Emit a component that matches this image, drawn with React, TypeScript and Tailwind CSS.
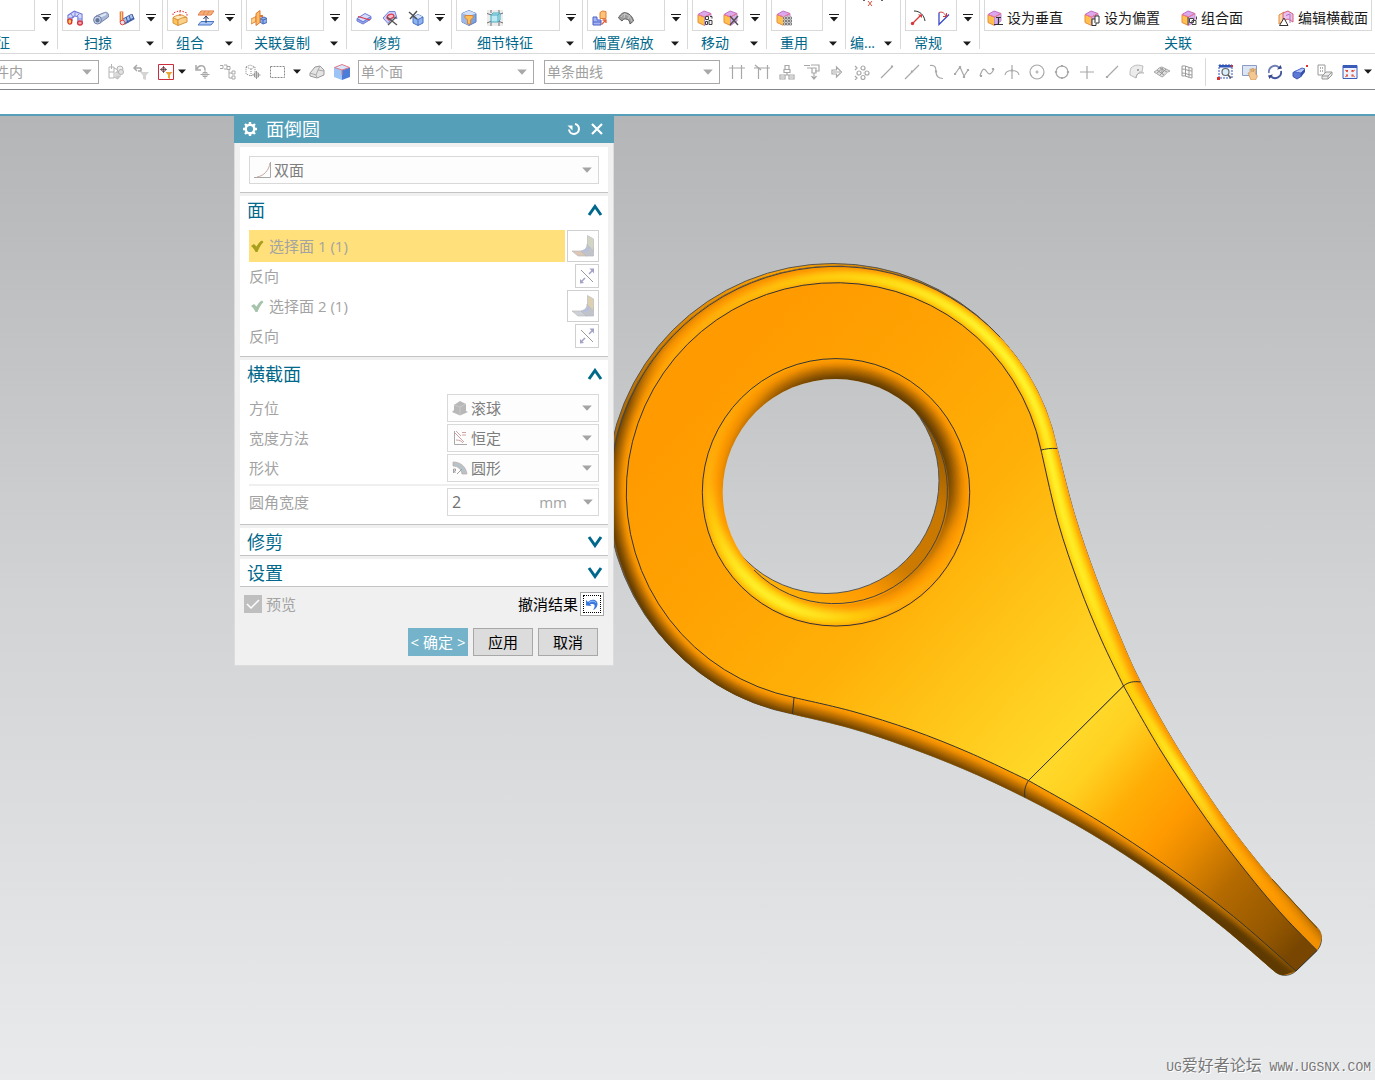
import type { ReactNode } from "react";

type Pt = [number, number];

/* ---------- small pieces ---------- */

const Icon = ({ children, size = 16 }: { children: ReactNode; size?: number }) => (
  <svg width={size} height={size} viewBox="0 0 16 16" fill="none" className="shrink-0" aria-hidden="true">
    {children}
  </svg>
);

const Triangle = ({ color = "#1a1a1a", width = 8 }: { color?: string; width?: number }) => (
  <svg width={width} height={width / 2 + 1} viewBox="0 0 8 5" className="shrink-0 pointer-events-none" aria-hidden="true">
    <path d="M0 0.5h8L4 4.8z" fill={color} />
  </svg>
);

const MoreArrow = () => (
  <svg width="10" height="8" viewBox="0 0 10 8" aria-hidden="true">
    <path d="M0 0.5h10" stroke="#1a1a1a" />
    <path d="M1 3h8L5 7.4z" fill="#1a1a1a" />
  </svg>
);

const Cube = () => (
  <>
    <path d="M1 4.5 7.500 7v8.500L1 12.500z" fill="#ffc04e" stroke="#ea8a3c" />
    <path d="M7.500 7 14 3.500V11l-6.500 4.500z" fill="#d3b0e8" stroke="#c48ad0" />
    <path d="M1 4.500 7 1l7 2.500L7.500 7z" fill="#dba8ee" stroke="#c070c0" />
    <path d="M1 4.500 7.500 7 14 3.500" stroke="#f0788a" />
  </>
);

/* ---------- ribbon icons ---------- */

const sweepIcons = [
  <Icon key="a">
    <path d="M3 11V6.500L7.500 3.500l5.500 2V12" stroke="#6a76d8" strokeWidth="5.200" />
    <path d="M3 11V6.500L7.500 3.500l5.500 2V12" stroke="#d4d8fa" strokeWidth="3.200" />
    <path d="m4 4 3 4M8 2v3.500M12 4 9.500 6.500M5 8H1.500M10.500 9H15" stroke="#8088dc" />
    <ellipse cx="2.800" cy="11.500" rx="2" ry="2.600" fill="#ffd060" stroke="#e0322c" strokeWidth="1.300" />
    <ellipse cx="13" cy="13" rx="2.400" ry="2" fill="#f6a0a8" stroke="#d83444" strokeWidth="1.300" />
  </Icon>,
  <Icon key="b">
    <path d="M3 6 11.500 2.500c3-1 4.500 1.500 4 4.500L7 13z" fill="#a9b8d6" stroke="#7787ab" />
    <path d="M5 7.500 13 4" stroke="#dfe7f5" strokeWidth="2" />
    <ellipse cx="4.500" cy="10" rx="3.900" ry="4" fill="#c8d3e8" stroke="#6d7ea6" />
    <ellipse cx="4.500" cy="10.300" rx="2.100" ry="2.200" fill="#66779c" />
  </Icon>,
  <Icon key="c">
    <path d="M4 12 14 6.500" stroke="#4c69ae" strokeWidth="6.500" />
    <path d="M4 11.500 13.500 6" stroke="#a8c2ee" strokeWidth="3.500" />
    <path d="m7 7 2 6M10 5.500l2 5.500M13 4l2 5" stroke="#3c589c" />
    <path d="M2.500 1.500V12" stroke="#e06a38" strokeWidth="3.600" />
    <path d="M2.500 2v9" stroke="#ffd28a" strokeWidth="1.400" />
    <circle cx="3.500" cy="12.500" r="2.300" fill="#e8e0f0" stroke="#dd4a3a" />
  </Icon>,
];

const combineIcons = [
  <Icon key="a">
    <path d="M1 7.500 6 10v5.500L1 13z" fill="#ffc35c" stroke="#d9943a" />
    <path d="M1 7.500c3-2 5-2.500 9-2.500l5 2.500L6 10z" fill="#ffe9bd" stroke="#d9943a" />
    <path d="M6 10c3-2.500 6-2.500 9-2.500V12l-9 3.500z" fill="#f8d08a" stroke="#d9943a" />
    <path d="M1 5V3l7-2.500L15 3v3M8 1v5" stroke="#e02828" strokeDasharray="1.500 1.500" />
  </Icon>,
  <Icon key="b">
    <path d="M3 1h13l-3 4H0z" fill="#ffd49a" stroke="#de7140" />
    <path d="M2 3h12M7 1 5 5M11 1 9 5" stroke="#e8894e" />
    <path d="M3 11.500h13L13 15H0z" fill="#a9c8f5" stroke="#4a74c4" />
    <path d="M8 13V7M5.500 9 8 6l2.500 3" stroke="#2b3a66" />
  </Icon>,
];

const copyIcons = [
  <Icon key="a">
    <path d="M0 9 5 6.500v5L0 14z" fill="#ffcf88" stroke="#e08a3c" />
    <path d="M9 8.500 13 7l3 1.500v4L12 14l-3-2z" fill="#8fb2ee" stroke="#4568b8" />
    <path d="m9 8.500 3 1.500 4-1.500M12 10v4" stroke="#4568b8" />
    <path d="M5 3.500 9 .5v12L5 15.500z" fill="#ffbc66" stroke="#dc7830" />
    <path d="M9 6h3" stroke="#dc7830" strokeWidth="2" />
  </Icon>,
];

const trimIcons = [
  <Icon key="a">
    <path d="M1 8.500 9 3.500l6 3L7 12z" fill="#d5dcff" stroke="#6f7cd4" />
    <path d="M1 8.500v2.500l6 3 8-5V6.500L7 12z" fill="#93a6ee" stroke="#6f7cd4" />
    <path d="M2 6.500 14 10" stroke="#e03848" strokeWidth="1.300" />
  </Icon>,
  <Icon key="b">
    <path d="M1 8 7 1.500h6l2 7-4-1-5 6z" fill="#c9cffa" stroke="#7784d8" />
    <path d="M5 8c0-4 6-5 7-2 0 3-4 1-5 4z" fill="#f4c0cc" stroke="#de3a4e" strokeWidth="1.300" />
    <path d="m5 7 10 8M14 7 6 15" stroke="#555" strokeWidth="1.400" />
  </Icon>,
  <Icon key="c">
    <path d="m5 7 5-2.500L15 7v6l-5 2.500L5 13z" fill="#8db4f0" stroke="#4a70c4" />
    <path d="m5 7 5-2.500L15 7l-5 2.500z" fill="#d6e5fc" />
    <path d="m5 7 5 2.500L15 7M10 9.500v6" stroke="#4a70c4" />
    <path d="m1 2 8 7M9 1 2 9" stroke="#505050" strokeWidth="1.400" />
  </Icon>,
];

const detailIcons = [
  <Icon key="a">
    <path d="m1 3.500 7-3 7 3v8.500l-7 3.500L1 12z" fill="#7fa3de" stroke="#5a7dc0" />
    <path d="m1 3.500 7-3 7 3L8 6z" fill="#cfdff8" />
    <path d="M1 3.500V12l7 3.500V6z" fill="#9bb9ea" />
    <path d="M4 5.500h8v2L9.500 10v4h-3v-4L4 7.500z" fill="#ffbe54" stroke="#d8843a" />
  </Icon>,
  <Icon key="b">
    <path d="M0 0h16v16H0z" fill="#ececec" />
    <path d="M0 3.500 4.500 5M0 13l4.500-2M16 3l-5 2M16 13l-5-2M4 0v3M12 0v3M4 16v-4M12 16v-4" stroke="#707070" />
    <path d="m4 5 2-2h7v7l-2 2H4z" fill="#bdeaf2" stroke="#4aa9c0" />
    <path d="M4 5h7v7M11 5l2-2" stroke="#4aa9c0" />
  </Icon>,
];

const offsetIcons = [
  <Icon key="a">
    <path d="M8 2.500 10.500 1 14 1.500V8.500H8z" fill="#ffc277" stroke="#de8038" />
    <path d="M1 7h4v3h4v5H1z" fill="#a4b6f4" stroke="#4c60c4" />
    <path d="M1 12h8" stroke="#4c60c4" />
    <path d="m9.500 14.500 4-4M10.500 10H14v3" stroke="#e0603a" strokeWidth="1.300" />
  </Icon>,
  <Icon key="b">
    <path d="M.5 8C3 3 6 1.500 10 3.500c3 1.500 5 4.500 5.500 7.500L12 14c0-3-2-5-4.500-5C6 9 5 9.500 4 11z" fill="#9c9c9c" stroke="#5c5c5c" />
    <path d="M3 7c2-3 4-3.500 7-1.500 2 1.500 3.500 4 4 6M7 3 6 8M12 5l-2 4" stroke="#c8c8c8" />
  </Icon>,
];

const moveIcons = [
  <Icon key="a">
    <Cube />
    <path d="M8 6h7v9H8z" fill="#f4f4f4" />
    <path d="M8.500 6.500h3v3h-3zM12 10.500h3v4h-3zM8.500 11.500h2v3h-2zM13 6.500h2v2" stroke="#404040" />
  </Icon>,
  <Icon key="b">
    <Cube />
    <path d="m7 6 8 9M15 6l-8 9" stroke="#505050" strokeWidth="1.400" />
  </Icon>,
];

const reuseIcons = [
  <Icon key="a">
    <Cube />
    <path d="M7 6.500h9V16H7z" fill="#fff" />
    <path d="M7.500 7h2v2h-2zM10.500 7h2v2h-2zM13.500 7h2v2h-2zM7.500 10h2v2h-2zM10.500 10h2v2h-2zM13.500 10h2v2h-2zM7.500 13h2v2h-2zM10.500 13h2v2h-2zM13.500 13h2v2h-2z" stroke="#555" strokeWidth="0.700" />
  </Icon>,
];

const commonIcons = [
  <Icon key="a">
    <path d="M4 1c6 0 10 4 11 10" stroke="#333" />
    <path d="m2 14 8-8" stroke="#d83838" strokeWidth="1.200" />
    <path d="M8 4.500h4V8z" fill="#d83838" />
    <circle cx="2.500" cy="13.500" r="1.700" fill="#d83838" />
  </Icon>,
  <Icon key="b">
    <path d="M3 2.500v12L13 4.500" stroke="#3848c8" strokeWidth="1.300" />
    <path d="M3 2.500c3-1 5 0 7 3.500M10.500 3v3.500H7" stroke="#d83838" />
  </Icon>,
];

const relateItems = [
  {
    label: "设为垂直",
    icon: <Icon><Cube /><path d="M7 14.500h9M11.500 7v7.500M9 7.500h5" stroke="#333" strokeWidth="1.200" /></Icon>,
  },
  {
    label: "设为偏置",
    icon: <Icon><Cube /><path d="M8 9h3V6h4v7h-3v2.500H8zM11 9v4" fill="#fff" stroke="#333" /></Icon>,
  },
  {
    label: "组合面",
    icon: <Icon><Cube /><path d="M8.500 8.500h4v4h-4zM11 10.500h4v4h-4zM7 7v8M15.500 6.500v3" fill="#fff" stroke="#444" /></Icon>,
  },
  {
    label: "编辑横截面",
    icon: (
      <Icon>
        <path d="M1 5 6 2v9l-5 3z" fill="#ffd8a8" stroke="#e08a3c" />
        <path d="m5 3 5-2 5 3v8l-5-3-5 2z" fill="#e9c0ec" stroke="#d4607a" />
        <path d="M8 5.500 12 4v9" stroke="#b070c8" />
        <path d="m6 8 4 7.500H1.500z" fill="#fff" stroke="#333" />
      </Icon>
    ),
  },
];

/* ---------- selection bar icons ---------- */

const g = "#a8a8a8";

const lineIcons = [
  "M0 4h16M3.500 1v14M12.500 1v14",
  "M0 4h16M4.500 3v12M13.500 1v14M1 1l6 5",
  "M6 1.500h4v4H6zM5 5.500h6v3H5zM1 11h5v4H1zM10 11h5v4h-5zM8 9v2M3 11h10M2 13h3M11 13h3",
  "M0 1.500h6M3 4h6M7 1h8v6h-4M8 4h4v5H8zM10 9v5M7.500 12l2.500 3 2.500-3",
  "M3 6h4.500V3l5 5-5 5v-3H3zM4 8h7",
  "M1 2l2 2-2 2M1 12l2 2-2 2M7 4a2 2 0 1 0 4 0 2 2 0 0 0-4 0M3 9a2 2 0 1 0 4 0 2 2 0 0 0-4 0M11 9a2 2 0 1 0 4 0 2 2 0 0 0-4 0M7 13.500a2 2 0 1 0 4 0 2 2 0 0 0-4 0M9 9h.5",
  "M2 14 13 3M12.500 2h1v1h-1z",
  "M1 15 15 1M7.500 7h1v1h-1z",
  "M1 1.500c5-1 6 2 6 6s2 7 7 7M6.500 7h1v1h-1z",
  "M1 10 6 3l4 9 4-6M0.500 9.500h1v1h-1zM5.500 2.500h1v1h-1zM9.500 12.500h1v1h-1zM13.500 5.500h1v1h-1z",
  "M1 12C4 2 6 5 8 8s4 3 7-3M1.500 11.500h1v1h-1zM13.500 4.500h1v1h-1z",
  "M8 1v14M1 11c1-6 13-6 14 0M7.500 6h1v1h-1z",
  "M1 8a7 7 0 1 0 14 0A7 7 0 0 0 1 8M7.500 8h1M6.500 8h3M8 6.500v3",
  "M2 8a6 6 0 1 0 12 0A6 6 0 0 0 2 8M7.500 1.500h1v1h-1zM7.500 13.500h1v1h-1zM1.500 7.500h1v1h-1zM13.500 7.500h1v1h-1z",
  "M8 2v13M1 8h14",
  "M3 13 14 2M2.500 12.500h1v1h-1z",
];

const surfaceIcons = [
  <Icon key="a">
    <path d="M2 4c4-4 8-3 12-2l-1 6c-3-1-5 2-6 6L1 11c0-3 0-5 1-7z" fill="#ececec" stroke="#bdbdbd" />
    <path d="M8 5h2v2H8z" fill={g} />
    <path d="M7 14c0-3 2-6 8-5" stroke={g} />
  </Icon>,
  <Icon key="b">
    <path d="M0 8c3-1 4-5 8-5l8 4c-4 1-5 5-8 6z" fill="#dcdcdc" stroke={g} />
    <path d="m3 9 6-5M6 11l6-6M3 6l7 5M6 4l7 4M8 6v4" stroke="#999" />
  </Icon>,
  <Icon key="c">
    <path d="M3 2c4-1 6 2 10 2v10c-4 0-6-3-10-2zM3 5c4 0 6 2 10 2M3 9c4 0 6 2 10 2M6.500 2v10M10 3v10" stroke="#999" />
  </Icon>,
];

const viewIcons = [
  <Icon key="a">
    <path d="M2 1h13v13H2z" fill="#f4f8ff" stroke="#3a58b4" strokeDasharray="2 1" />
    <path d="M2 1h13v2.500H2z" fill="#2f55b8" />
    <circle cx="8.500" cy="8" r="3.500" fill="#d8eef8" stroke="#666" strokeWidth="1.200" />
    <path d="m11 11 3 3" stroke="#555" strokeWidth="1.600" />
    <path d="M0 13h3v3H0zM14 1h2v2h-2z" fill="#d83030" />
  </Icon>,
  <Icon key="b">
    <path d="M.5 1.500h14v10H.500z" fill="#dce5f4" stroke="#8a9cc4" />
    <path d="M6 9c1-1 2 1 2 0V5h1.500l.5 3V4.500h1.500V8l1-3H14l-.5 5 2 2-2 4H9z" fill="#f4c890" stroke="#c8955a" strokeWidth="0.700" />
  </Icon>,
  <Icon key="c">
    <path d="M2 9a6 6 0 0 1 10-5.500" stroke="#7080b4" strokeWidth="1.800" />
    <path d="M14 7a6 6 0 0 1-10 5.500" stroke="#44569a" strokeWidth="1.800" />
    <path d="m10 5.500 5-1-1.500-3.500zM6 10.500l-5 1L2.500 15z" fill="#34468c" />
  </Icon>,
  <Icon key="d">
    <path d="m1 8.500 3-1.500 5 1.500v4L5 15l-4-2.500z" fill="#5a78d4" stroke="#3b54ac" />
    <path d="m2 8 8-4 3 1-4 4z" fill="#b4c4f4" stroke="#4a66c8" />
    <path d="m9 9 4-4v3l-4 5z" fill="#3450a8" />
    <path d="M14 1h2v2h-2z" fill="#e03030" />
  </Icon>,
  <Icon key="e">
    <path d="M1 1h7v10H1z" stroke="#999" />
    <path d="M3 4h1M5 4h1M3 7h1M5 7h1" stroke="#999" strokeWidth="1.500" />
    <path d="m5 12 4-4h6v3l-4 4H5zM5 12h6v3M11 12l4-4" fill="#eee" stroke="#999" />
  </Icon>,
  <Icon key="f">
    <path d="M1 1.500h14v13H1z" fill="#eef3ff" stroke="#3a5cb8" />
    <path d="M1 1.500h14V4H1z" fill="#3a5cb8" />
    <path d="M4 6h2v2H4zM9.500 6h2v2h-2zM4 10.500h2v2H4zM9.500 10.500h2v2h-2z" fill="#dc3a2c" />
    <path d="m3 6 3 2M13 6l-3 2M3 13l3-2M13 13l-3-2" stroke="#e8705c" />
  </Icon>,
];

/* ---------- ribbon ---------- */

type GroupProps = { label: string; icons: ReactNode[]; names: string; boxClass: string };

const RibbonGroup = ({ label, icons, names, boxClass }: GroupProps) => (
  <>
    <div className="flex h-[53px] shrink-0 flex-col">
      <div className="flex pl-1">
        <div className={`flex h-[31px] gap-0.5 border-x border-b border-[#d9d9d9] pt-1.5 ${boxClass}`}>
          {icons.map((icon, i) => (
            <button key={i} aria-label={`${names} ${i + 1}`} className="flex w-6 items-center justify-center">
              {icon}
            </button>
          ))}
        </div>
        <button aria-label={`${names}选项`} className="flex w-[22px] items-center justify-center pt-1">
          <MoreArrow />
        </button>
      </div>
      <button className="flex h-[22px] items-center pt-0.5 text-[#00688b]">
        <span className="flex-1 text-center leading-5">{label}</span>
        <span className="flex w-6 justify-center">
          <Triangle />
        </span>
      </button>
    </div>
    <div className="h-[49px] w-px shrink-0 bg-[#d9d9d9]" />
  </>
);

const Ribbon = () => (
  <header className="flex h-[54px] overflow-hidden border-b border-[#d9d9d9]">
    <div className="flex h-[53px] w-[57px] shrink-0 flex-col">
      <div className="flex">
        <div className="h-[31px] w-[35px] border-r border-b border-[#d9d9d9]" />
        <button aria-label="特征选项" className="flex w-[22px] items-center justify-center pt-1">
          <MoreArrow />
        </button>
      </div>
      <button className="flex h-[22px] items-center pt-0.5 text-[#00688b]">
        <span className="-ml-1 flex-1 text-left leading-5">征</span>
        <span className="flex w-6 justify-center">
          <Triangle />
        </span>
      </button>
    </div>
    <div className="h-[49px] w-px shrink-0 bg-[#d9d9d9]" />
    <RibbonGroup label="扫掠" names="扫掠" icons={sweepIcons} boxClass="w-[78px]" />
    <RibbonGroup label="组合" names="组合" icons={combineIcons} boxClass="w-[52px]" />
    <RibbonGroup label="关联复制" names="关联复制" icons={copyIcons} boxClass="w-[78px]" />
    <RibbonGroup label="修剪" names="修剪" icons={trimIcons} boxClass="w-[78px]" />
    <RibbonGroup label="细节特征" names="细节特征" icons={detailIcons} boxClass="w-[104px]" />
    <RibbonGroup label="偏置/缩放" names="偏置" icons={offsetIcons} boxClass="w-[78px]" />
    <RibbonGroup label="移动" names="移动" icons={moveIcons} boxClass="w-[52px]" />
    <RibbonGroup label="重用" names="重用" icons={reuseIcons} boxClass="w-[52px]" />
    <div className="flex h-[53px] w-[54px] shrink-0 flex-col">
      <button aria-label="编辑截面" className="flex h-[31px] justify-center">
        <svg width="20" height="7" viewBox="0 0 20 7" aria-hidden="true">
          <path d="M0 0h2M18 0h2" stroke="#333" strokeWidth="1.500" />
          <path d="m5 1 4 5M9 1 5 6" stroke="#d8503c" />
        </svg>
      </button>
      <button className="flex h-[22px] items-center pt-0.5 pl-1 text-[#00688b]">
        <span className="flex-1 text-left leading-5">编...</span>
        <span className="flex w-6 justify-center">
          <Triangle />
        </span>
      </button>
    </div>
    <div className="h-[49px] w-px shrink-0 bg-[#d9d9d9]" />
    <RibbonGroup label="常规" names="常规" icons={commonIcons} boxClass="w-[52px]" />
    <div className="flex h-[53px] shrink-0 flex-col pl-1">
      <div className="flex h-[31px] border-x border-b border-[#d9d9d9] pt-1.5">
        {relateItems.map(({ label, icon }) => (
          <button key={label} className="flex min-w-[97px] items-center gap-1 pl-0.5 leading-5 last:min-w-[95px]">
            {icon}
            {label}
          </button>
        ))}
      </div>
      <div className="flex h-[22px] items-center justify-center pt-0.5 leading-5 text-[#00688b]">关联</div>
    </div>
  </header>
);

const BarSelect = ({ value, label, className }: { value: string; label: string; className: string }) => (
  <div className={`flex h-6 shrink-0 items-center border border-[#a8a8a8] pr-1.5 ${className}`}>
    <select disabled aria-label={label} className="min-w-0 flex-1 appearance-none bg-transparent leading-5 text-[#a0a0a0]">
      <option>{value}</option>
    </select>
    <Triangle color="#a8a8a8" width={10} />
  </div>
);

const Tool = ({ name, children }: { name: string; children: ReactNode }) => (
  <button aria-label={name} className="flex h-6 w-[25px] shrink-0 items-center justify-center">
    {children}
  </button>
);

const SelectionBar = () => (
  <div className="flex h-9 items-center overflow-hidden border-b border-[#80868c]">
    <BarSelect value="件内" label="选择范围" className="-ml-1.5 w-[105px]" />
    <div className="ml-1 flex items-center">
      <Tool name="装配过滤">
        <Icon>
          <path d="M1 3h5v11H1zM1 8h5M6 4l4 2v9l-4-2M3.500 0v5M8 8h4v5H8z" stroke="#b4b4b4" />
          <circle cx="12" cy="5" r="3" fill="#eee" stroke="#b4b4b4" />
          <circle cx="13" cy="8" r="2.500" fill="#e2e2e2" stroke="#b4b4b4" />
        </Icon>
      </Tool>
      <Tool name="重置过滤">
        <Icon>
          <path d="M1 4h7M4 1 1 4l3 3M8 4v3H5" stroke={g} strokeWidth="1.500" />
          <path d="M7 8h9l-3 3.500V16l-3-1v-3.500z" fill="#d4d4d4" />
        </Icon>
      </Tool>
      <Tool name="捕捉过滤">
        <Icon>
          <path d="M.5.500h15v15H.500z" fill="#fff" stroke="#cc2c3c" />
          <circle cx="5.500" cy="5.500" r="2" stroke="#993040" />
          <path d="M5.500 2v7M2 5.500h7" stroke="#444" strokeWidth="0.800" />
          <path d="M7.500 8h7L12 11v4l-2-1v-3z" fill="#e8a83c" />
        </Icon>
      </Tool>
    </div>
    <button aria-label="过滤选项" className="flex w-3 justify-start">
      <Triangle />
    </button>
    <Tool name="撤消选择">
      <Icon>
        <path d="M2 5c2-5 8-4 8 1M1 1v5h5" stroke={g} strokeWidth="1.500" />
        <path d="M10 6v9M5.500 10.500h9M8 8.500h4v4H8z" stroke={g} />
      </Icon>
    </Tool>
    <Tool name="查找节点">
      <Icon>
        <path d="M0 1.500h3v3H0M4 1h3v4H4M7 2.500h3v3H7" stroke={g} />
        <path d="M9 5v9h3M9 9h3M12 7h3v3h-3zM12 12h3v3h-3z" stroke={g} />
      </Icon>
    </Tool>
    <Tool name="移动对象">
      <Icon>
        <path d="m1 3 4-2 5 2v6L6 12l-5-2zM1 3l5 2 4-2M6 5v7" stroke="#888" strokeDasharray="1 1" />
        <path d="M11.500 7v8M7.500 11h8M9.500 9h4v4h-4z" stroke="#999" />
      </Icon>
    </Tool>
    <Tool name="矩形选择">
      <Icon>
        <path d="M.5 2.500h14v11H.500z" stroke="#888" strokeDasharray="2 1" />
      </Icon>
    </Tool>
    <button aria-label="矩形选项" className="flex w-3.5 justify-center">
      <Triangle />
    </button>
    <Tool name="体">
      <Icon>
        <path d="m1 9 5-6 5-1 4 4v5l-7 3-7-2z" fill="#e4e4e4" stroke="#999" />
        <path d="m1 9 6 2 2-5 2-4M7 11l1 3M9 6l6 1" stroke="#aaa" />
      </Icon>
    </Tool>
    <Tool name="实体面">
      <Icon>
        <path d="M0 3.500 8 6v10l-8-3z" fill="#9cc4f6" />
        <path d="M8 6l8-2.500V13l-8 3z" fill="#4a7cd8" />
        <path d="M.5 3.500 8 .5l7.500 3L8 6z" fill="#d8e8fc" stroke="#e07888" />
        <path d="M8 6v5" stroke="#e07888" />
      </Icon>
    </Tool>
    <BarSelect value="单个面" label="面规则" className="ml-1 w-44 pl-0.5" />
    <BarSelect value="单条曲线" label="曲线规则" className="mr-1 ml-2.5 w-44 pl-0.5" />
    {lineIcons.map((d, i) => (
      <Tool key={i} name={`捕捉点 ${i + 1}`}>
        <Icon>
          <path d={d} stroke={g} strokeWidth="1.200" />
        </Icon>
      </Tool>
    ))}
    {surfaceIcons.map((icon, i) => (
      <Tool key={i} name={`曲面 ${i + 1}`}>
        {icon}
      </Tool>
    ))}
    <div className="mr-1.5 ml-1.5 h-7 w-px shrink-0 bg-[#d9d9d9]" />
    {viewIcons.map((icon, i) => (
      <Tool key={i} name={`视图 ${i + 1}`}>
        {icon}
      </Tool>
    ))}
    <button aria-label="视图选项" className="ml-0.5 flex shrink-0">
      <Triangle />
    </button>
  </div>
);

/* ---------- model ---------- */

const ramp: [number, number, number, number][] = [
  [-1, 94, 57, 0],
  [-0.65, 98, 60, 0],
  [-0.4, 128, 77, 0],
  [0.05, 192, 114, 0],
  [0.38, 240, 143, 0],
  [0.6, 255, 156, 0],
  [0.72, 255, 172, 10],
  [0.85, 255, 206, 10],
  [0.93, 255, 224, 28],
  [1, 255, 248, 48],
];

const shade = (s: number) => {
  const v = Math.max(-1, Math.min(1, s));
  const i = Math.max(1, ramp.findIndex((r) => r[0] >= v));
  const a = ramp[i - 1];
  const b = ramp[i];
  const k = (v - a[0]) / (b[0] - a[0]);
  const mix = (n: 1 | 2 | 3) => Math.round(a[n] + (b[n] - a[n]) * k);
  return `rgb(${mix(1)},${mix(2)},${mix(3)})`;
};

// smooth path through the points
const curve = (pts: Pt[]) =>
  pts
    .map((p, i) => {
      if (i === 0) return `${p[0]} ${p[1]}`;
      const p0 = pts[Math.max(0, i - 2)];
      const p1 = pts[i - 1];
      const p3 = pts[Math.min(pts.length - 1, i + 1)];
      return `C${p1[0] + (p[0] - p0[0]) / 6} ${p1[1] + (p[1] - p0[1]) / 6} ${p[0] - (p3[0] - p1[0]) / 6} ${p[1] - (p3[1] - p1[1]) / 6} ${p[0]} ${p[1]}`;
    })
    .join(" ");

const blend = (a: Pt[], b: Pt[], t: number): Pt[] =>
  a.map((p, i) => [p[0] + (b[i][0] - p[0]) * t, p[1] + (b[i][1] - p[1]) * t]);

const rightIn: Pt[] = [[1041, 450], [1058, 522], [1079, 585], [1101, 639], [1123.5, 686], [1161, 751], [1206.5, 819.5], [1250, 876.5], [1283.5, 916], [1317, 950.5]];
const rightOut: Pt[] = [[1057, 448], [1075, 516], [1096, 577.5], [1118, 632], [1140.5, 682], [1177, 747], [1221, 814], [1263, 868.5], [1295, 904], [1323, 934]];
const lowIn: Pt[] = [[794, 697.5], [853, 711.500], [912, 730], [970, 753], [1028.5, 780.5], [1098, 820.5], [1166.5, 866], [1233.5, 916.500], [1296, 971]];
const lowOut: Pt[] = [[792.5, 714], [850, 728], [905, 746], [965, 769.500], [1025, 797.5], [1091, 833.500], [1157, 876.500], [1222, 926.500], [1279, 976]];

const rev = (p: Pt[]) => [...p].reverse();
const silhouette = `M${curve([...rightOut.slice(0, 9), [1317, 927.5]])} C1323 933 1323 944 1317 950.500 L1296 971 C1289 977 1280 977 1273 970 L${curve([[1273, 970], ...rev(lowOut).slice(1)])} A226 226 0 1 1 1057 448Z`;
const faceBody = `M${curve(rightIn.slice(0, 5))} L1028.500 780.500 L${curve(rev(lowIn.slice(0, 5)))} A209.500 209.500 0 1 1 1041 450Z`;
const neck = `M${curve(rightIn.slice(4))} L1296 971 L${curve(rev(lowIn.slice(4)))}Z`;

const steps = Array.from({ length: 17 }, (_, i) => i / 16);
const lightZ = 0.67;

// side light for k = -1 ... 1 along the light axis
const rimLight = [-0.62, -0.5, -0.38, 0.14, 0.28, 0.38, 0.48, 0.6, 0.72];
const holeLight = [-0.68, -0.56, -0.34, -0.02, 0.12, 0.22, 0.32, 0.5, 0.7];

type RoundProps = { id: string; r0: number; r1: number; dir: Pt; profile: number[] };

const RoundBand = ({ id, r0, r1, dir, profile }: RoundProps) => (
  <>
    {steps.map((t, i) => {
      const r = r0 + (r1 - r0) * t;
      const up = lightZ * Math.cos((t * Math.PI) / 2);
      const out = Math.sin((t * Math.PI) / 2);
      return (
        <g key={i}>
          <linearGradient
            id={`${id}${i}`}
            gradientUnits="userSpaceOnUse"
            x1={836 - dir[0] * r}
            y1={492.5 - dir[1] * r}
            x2={836 + dir[0] * r}
            y2={492.5 + dir[1] * r}
          >
            {profile.map((p, k) => (
              <stop key={k} offset={k / 8} stopColor={shade(up + out * p)} />
            ))}
          </linearGradient>
          <circle cx="836" cy="492.500" r={r} stroke={`url(#${id}${i})`} strokeWidth="2.400" fill="none" />
        </g>
      );
    })}
  </>
);

type Key = { at: number; dot: number; lift: number };

const EdgeBand = ({ id, from, to, keys, axis }: { id: string; from: Pt[]; to: Pt[]; keys: Key[]; axis: number[] }) => (
  <>
    {steps.map((t, i) => (
      <g key={i}>
        <linearGradient id={`${id}${i}`} gradientUnits="userSpaceOnUse" x1={axis[0]} y1={axis[1]} x2={axis[2]} y2={axis[3]}>
          {keys.map((k) => (
            <stop
              key={k.at}
              offset={k.at}
              stopColor={shade(lightZ * Math.cos((t * Math.PI) / 2) + k.dot * Math.sin((t * Math.PI) / 2) + k.lift)}
            />
          ))}
        </linearGradient>
        <path d={`M${curve(blend(from, to, t))}`} stroke={`url(#${id}${i})`} strokeWidth="2.600" fill="none" />
      </g>
    ))}
  </>
);

const Model = () => (
  <svg
    viewBox="0 116 1375 964"
    preserveAspectRatio="xMinYMin meet"
    className="absolute inset-0 h-full w-full"
    role="img"
    aria-label="模型"
  >
    <defs>
      <linearGradient id="face" gradientUnits="userSpaceOnUse" x1="700" y1="400" x2="1075" y2="735">
        <stop offset="0" stopColor="#ff9b00" />
        <stop offset="0.250" stopColor="#ffa202" />
        <stop offset="0.550" stopColor="#ffb008" />
        <stop offset="0.850" stopColor="#ffcc1e" />
        <stop offset="1" stopColor="#ffd828" />
      </linearGradient>
      <linearGradient id="neck" gradientUnits="userSpaceOnUse" x1="1066" y1="743" x2="1300" y2="945">
        <stop offset="0" stopColor="#ffd92a" />
        <stop offset="0.120" stopColor="#ffd020" />
        <stop offset="0.270" stopColor="#ffae06" />
        <stop offset="0.430" stopColor="#ff9a00" />
        <stop offset="0.520" stopColor="#ec8d00" />
        <stop offset="0.700" stopColor="#b46a00" />
        <stop offset="0.900" stopColor="#945700" />
        <stop offset="1" stopColor="#784600" />
      </linearGradient>
      <linearGradient id="wall" gradientUnits="userSpaceOnUse" x1="935" y1="420" x2="800" y2="605">
        <stop offset="0" stopColor="#8a5200" />
        <stop offset="0.300" stopColor="#c87700" />
        <stop offset="0.600" stopColor="#cc7a00" />
        <stop offset="0.780" stopColor="#ff9a00" />
        <stop offset="1" stopColor="#ffb008" />
      </linearGradient>
      <linearGradient id="back" gradientUnits="userSpaceOnUse" x1="640" y1="600" x2="1000" y2="340">
        <stop offset="0" stopColor="#8a5200" />
        <stop offset="0.450" stopColor="#e08800" />
        <stop offset="0.700" stopColor="#ffa400" />
        <stop offset="1" stopColor="#b87000" />
      </linearGradient>
      <clipPath id="body">
        <path d={silhouette} />
      </clipPath>
      <clipPath id="bore">
        <circle cx="835.700" cy="492" r="113" />
      </clipPath>
      <mask id="through">
        <path d="M0 0H1375V1080H0z" fill="#fff" />
        <circle cx="826" cy="480.500" r="113" fill="#000" clipPath="url(#bore)" />
      </mask>
    </defs>
    <g mask="url(#through)">
      <circle cx="833" cy="489.500" r="226" fill="url(#back)" stroke="#555" />
      <path d={silhouette} fill="#e08a00" stroke="#555" />
      <g clipPath="url(#body)">
        <RoundBand id="rim" r0={209.5} r1={226} dir={[0.8, -0.6]} profile={rimLight} />
        <path d="M1041 450 L1057 448 L1323 934 L1296 971 L1279 976 L792.500 714z" fill="#ffb008" />
        <EdgeBand
          id="er"
          from={rightIn}
          to={rightOut}
          axis={[1049, 449, 1320, 945]}
          keys={[
            { at: 0, dot: 0.6, lift: 0.08 },
            { at: 0.25, dot: 0.5, lift: 0.12 },
            { at: 0.45, dot: 0.36, lift: 0.1 },
            { at: 0.62, dot: 0.5, lift: 0.12 },
            { at: 0.76, dot: 0.42, lift: -0.04 },
            { at: 0.88, dot: 0.4, lift: -0.2 },
            { at: 1, dot: 0.3, lift: -0.35 },
          ]}
        />
        <EdgeBand
          id="el"
          from={lowIn}
          to={lowOut}
          axis={[793, 705, 1288, 974]}
          keys={[
            { at: 0, dot: -0.5, lift: 0 },
            { at: 0.5, dot: -0.45, lift: 0 },
            { at: 0.7, dot: -0.6, lift: -0.15 },
            { at: 0.88, dot: -0.6, lift: -0.6 },
            { at: 1, dot: -0.4, lift: -1 },
          ]}
        />
      </g>
      <path d={faceBody} fill="url(#face)" stroke="#333" />
      <path d={neck} fill="url(#neck)" stroke="#333" />
      <RoundBand id="hole" r0={133.5} r1={113} dir={[-0.55, 0.83]} profile={holeLight} />
      <circle cx="835.700" cy="492" r="113" fill="url(#wall)" />
      <path d="M921 418A113 113 0 0 1 754 570" stroke="#444" fill="none" />
      <circle cx="836" cy="492.300" r="133.700" stroke="#333" fill="none" />
      <path d="M612 462A226 226 0 0 1 1000 337" stroke="#444" fill="none" />
      <path d="M1041 450C1046 449 1050 448 1057 448.500M794 697.500 792.500 714M1123.500 686C1128 682 1134 681 1140.500 682M1028.500 780.500C1025 786 1024 791 1025 797.500" stroke="#333" fill="none" />
      <path d="M1272 879 1317 928" stroke="#6b4a10" fill="none" />
    </g>
    <circle cx="826" cy="480.500" r="113" stroke="#555" fill="none" clipPath="url(#bore)" />
  </svg>
);

/* ---------- dialog ---------- */

const Chevron = ({ open }: { open: boolean }) => (
  <svg width="16" height="12" viewBox="0 0 16 12" fill="none" aria-hidden="true">
    <path d={open ? "M2 11 8 2.500 14 11" : "M2 1 8 9.500 14 1"} stroke="#00688b" strokeWidth="3" />
  </svg>
);

const Section = ({ title, open, children }: { title: string; open: boolean; children?: ReactNode }) => (
  <section className="mb-[3px] border-b border-[#c4c4c4] bg-white">
    <button aria-expanded={open} className="flex h-[27px] w-full items-center justify-between pr-[5px] pl-[7px] text-lg leading-6 text-[#00688b]">
      {title}
      <Chevron open={open} />
    </button>
    {children}
  </section>
);

const Dropdown = ({ id, icon, value }: { id: string; icon: ReactNode; value: string }) => (
  <div className="flex h-7 min-w-0 flex-1 items-center gap-[3px] border border-[#d9d9d9] bg-[#fdfdfd] pr-1.5 pl-1">
    {icon}
    <select id={id} disabled aria-label={value} className="min-w-0 flex-1 appearance-none bg-transparent leading-6 text-[#7d7d7d]">
      <option>{value}</option>
    </select>
    <Triangle color="#a4a4a4" width={10} />
  </div>
);

const FaceRow = ({ n, active }: { n: number; active: boolean }) => (
  <>
    <div className="flex h-8 gap-0.5">
      <div className={`flex flex-1 items-center gap-1 pl-0.5 text-[#a3a3a3] ${active ? "bg-[#ffe07a]" : ""}`}>
        <svg width="14" height="13" viewBox="0 0 14 13" aria-hidden="true">
          <path d="m0 6 3-2 2.500 2.500C7 4 8.500 1.500 11 .5l1.500 1.500C9.500 5 8 8 6.500 12H4.500C3.500 9.500 2 7.500 0 6z" fill={active ? "#a89f1c" : "#a6c4ac"} />
        </svg>
        选择面 {n} (1)
      </div>
      <button aria-label={`选择面 ${n}`} className="flex w-8 items-center justify-center border border-[#d0d0d0] bg-white">
        <svg width="24" height="24" viewBox="0 0 24 24" aria-hidden="true">
          <path d="M1 17h10l5 5H7z" fill={active ? "#dcc6b6" : "#cdd0d6"} stroke="#bbb" strokeWidth="0.700" />
          <path d="M16 10c0 4-2 6-6 7l5 5h7.500V13z" fill="#c0c4ca" stroke="#b4b8c0" strokeWidth="0.700" />
          <path d="M12 17c4 0 6-3 6.500-6" stroke="#b6c0de" strokeWidth="2" fill="none" />
          <path d="m16.500 1.500 6 3.500v12l-6-6z" fill={active ? "#d2d4c4" : "#dcd0b0"} stroke="#bbb" strokeWidth="0.700" />
        </svg>
      </button>
    </div>
    <div className="my-0.5 flex h-6 items-center justify-between text-[#a3a3a3]">
      反向
      <button aria-label={`反向 ${n}`} className="flex h-6 w-6 items-center justify-center border border-[#d0d0d0] bg-white">
        <Icon>
          <path d="m2 2 12 12" stroke="#999" />
          <path d="m2 14 4-4M10 6l4-4" stroke="#a3a3c8" strokeWidth="1.500" />
          <path d="M1 15.500V11l4 4zM15 .5v5l-4.500-5z" fill="#a3a3c8" />
        </Icon>
      </button>
    </div>
  </>
);

const crossRows = [
  {
    id: "orient",
    label: "方位",
    value: "滚球",
    icon: (
      <Icon>
        <path d="m2 5 6-4 6 3v7l2 1-8 3.500-8-3.500 2-2z" fill="#b8b8b8" />
        <path d="m2 5 6 2 6-3M8 7v8" stroke="#c8c8c8" />
      </Icon>
    ),
  },
  {
    id: "width-method",
    label: "宽度方法",
    value: "恒定",
    icon: (
      <Icon>
        <path d="M2.500 1v13.500H15" stroke="#a8a8a8" />
        <path d="m3 3 9 9M4 1l5 5M10 2.500h4M10 5h4M4 10c3 0 6 1 7 3" stroke="#cfa3a3" />
      </Icon>
    ),
  },
  {
    id: "shape",
    label: "形状",
    value: "圆形",
    icon: (
      <Icon>
        <path d="M1 2c8 0 13 5 14 12h-5C9 9 6 6 1 6z" fill="#b5c4c8" stroke="#c4a4a8" strokeWidth="0.700" />
        <path d="M1.500 13V9h2v2h-2l2 2M5 14l5-5" stroke="#a0a0a0" />
      </Icon>
    ),
  },
];

const Dialog = () => (
  <div role="dialog" aria-label="面倒圆" className="absolute -top-0.5 left-[234px] w-[380px] border border-t-0 border-[#dcdcdc] bg-[#f0f0f0] text-[15px] leading-6">
    <div className="-mx-px flex h-[29px] items-center bg-[#559fb9] pr-2.5 pl-2 text-white">
      <svg width="16" height="16" viewBox="0 0 16 16" fill="none" aria-hidden="true">
        <circle cx="8" cy="8" r="4.300" stroke="#fff" strokeWidth="2.400" />
        <path d="M8 1v2M8 13v2M1 8h2M13 8h2M3 3l1.500 1.500M11.500 11.500 13 13M13 3l-1.500 1.500M4.500 11.500 3 13" stroke="#fff" strokeWidth="2.400" />
      </svg>
      <h2 className="ml-2 flex-1 text-lg leading-6">面倒圆</h2>
      <button aria-label="重置" className="mr-2">
        <svg width="16" height="16" viewBox="0 0 16 16" fill="none" aria-hidden="true">
          <path d="M9 3a5 5 0 1 1-6 5.500" stroke="#fff" strokeWidth="2" />
          <path d="M1.500 4.500h5v5z" fill="#fff" />
        </svg>
      </button>
      <button aria-label="关闭">
        <svg width="14" height="14" viewBox="0 0 14 14" fill="none" aria-hidden="true">
          <path d="m2 2 10 10M12 2 2 12" stroke="#fff" strokeWidth="2.200" />
        </svg>
      </button>
    </div>
    <div className="px-[5px] pt-1">
      <section className="mb-[3px] flex border-b border-[#c4c4c4] bg-white px-[9px] py-2 pt-[9px]">
        <Dropdown
          id="type"
          value="双面"
          icon={
            <svg width="17" height="18" viewBox="0 0 17 18" fill="none" aria-hidden="true">
              <path d="M0 16.500h16.500V1" stroke="#a8a8a8" />
              <path d="M3 16C10 15 15 9 16 2" stroke="#c8a8a0" />
            </svg>
          }
        />
      </section>
      <Section title="面" open>
        <div className="px-[9px] pt-[7px] pb-1.5">
          <FaceRow n={1} active />
          <FaceRow n={2} active={false} />
        </div>
      </Section>
      <Section title="横截面" open>
        <div className="px-[9px] pt-[7px] pb-2">
          <div className="flex flex-col gap-0.5">
            {crossRows.map(({ id, label, value, icon }) => (
              <div key={id} className="flex items-center text-[#a3a3a3]">
                <label htmlFor={id} className="w-[198px]">
                  {label}
                </label>
                <Dropdown id={id} icon={icon} value={value} />
              </div>
            ))}
          </div>
          <div className="my-0.5 h-0.5 bg-[#efefef]" />
          <div className="flex items-center text-[#a3a3a3]">
            <label htmlFor="radius" className="w-[198px]">
              圆角宽度
            </label>
            <div className="flex h-7 min-w-0 flex-1 items-center border border-[#d9d9d9] pr-[5px] pl-1">
              <input id="radius" defaultValue="2" disabled className="min-w-0 flex-1 bg-transparent text-base text-[#707070]" />
              <span className="mr-4">mm</span>
              <Triangle color="#a4a4a4" width={10} />
            </div>
          </div>
        </div>
      </Section>
      <Section title="修剪" open={false} />
      <Section title="设置" open={false} />
    </div>
    <div className="flex items-center justify-between pt-0.5 pr-[9px] pb-1 pl-[9px]">
      <label className="flex items-center gap-1 text-[#a3a3a3]">
        <span className="grid h-[18px] w-[18px]">
          <input type="checkbox" defaultChecked disabled className="col-start-1 row-start-1 appearance-none bg-[#bfbfbf]" />
          <svg viewBox="0 0 18 18" fill="none" className="col-start-1 row-start-1" aria-hidden="true">
            <path d="m3 9 4 4 8-8" stroke="#fff" strokeWidth="1.500" />
          </svg>
        </span>
        预览
      </label>
      <div className="flex items-center gap-0.5 text-black">
        撤消结果
        <button aria-label="撤消结果" className="h-6 w-6 border border-[#a8a8a8] bg-white p-0.5">
          <span className="flex items-center justify-center border border-dotted border-black">
            <Icon>
              <path d="M2 9.500V4l2 2c4-4 10-2 9.500 2.500-.5 3-2 4.500-4.500 5.500 2-2.500 2.500-6-.5-6-1 0-2 0-2.500.5L7.500 10z" fill="#3b78dc" />
              <path d="M5 6.500c3-2 6-1.500 7 .5" stroke="#9cc4fa" />
            </Icon>
          </span>
        </button>
      </div>
    </div>
    <div className="flex justify-end gap-[5px] pt-2 pr-[15px] pb-[9px] text-black">
      <button className="h-7 w-[60px] bg-[#74b3ca] whitespace-nowrap text-white">&lt; 确定 &gt;</button>
      <button className="h-7 w-[60px] border border-[#a8a8a8] bg-[#dcdcdc]">应用</button>
      <button className="h-7 w-[60px] border border-[#a8a8a8] bg-[#dcdcdc]">取消</button>
    </div>
  </div>
);

export default function App() {
  return (
    <div className="flex min-h-screen flex-col overflow-hidden bg-white font-['Open_Sans','Noto_Sans_CJK_SC',sans-serif] text-sm text-[#1a1a1a]">
      <Ribbon />
      <SelectionBar />
      <div className="h-6" />
      <main className="relative flex-1 border-t-2 border-[#559fb9] bg-linear-to-b from-[#b4b5b6] via-[#d2d3d5] to-[#e9eaec]">
        <Model />
        <Dialog />
        <p className="absolute right-1 bottom-0 font-['Liberation_Mono','Noto_Sans_CJK_SC',monospace] text-[13px] leading-6 text-[#777] [text-shadow:1px_1px_0_#fff]">
          UG<span className="text-base leading-6">爱好者论坛</span> WWW.UGSNX.COM
        </p>
      </main>
    </div>
  );
}
